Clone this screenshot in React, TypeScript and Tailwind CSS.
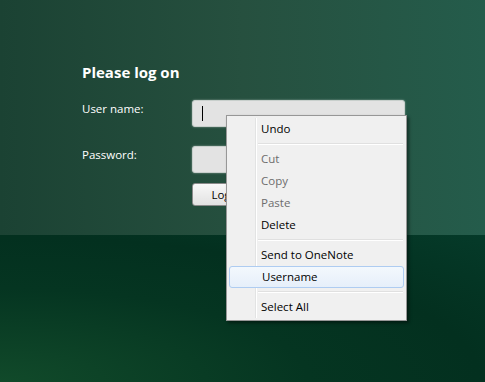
import React from 'react';

const font = { fontFamily: '"Open Sans", "Noto Sans", sans-serif' };

type Item = { label: string; disabled?: boolean; hot?: boolean } | 'sep';

const items: Item[] = [
  { label: 'Undo' },
  'sep',
  { label: 'Cut', disabled: true },
  { label: 'Copy', disabled: true },
  { label: 'Paste', disabled: true },
  { label: 'Delete' },
  'sep',
  { label: 'Send to OneNote' },
  { label: 'Username', hot: true },
  'sep',
  { label: 'Select All' },
];

function ContextMenu() {
  return (
    <div className="absolute left-[226px] top-[115px] w-[181px] bg-[#f0f0f0] border border-[#979797] shadow-[2px_2px_3px_rgba(0,0,0,0.45)] py-[2px] px-[2px]">
      {/* gutter line */}
      <div className="absolute left-[28px] top-[2px] bottom-[2px] w-px bg-[#e2e3e3]" />
      <div className="absolute left-[29px] top-[2px] bottom-[2px] w-px bg-white" />
      {items.map((it, i) =>
        it === 'sep' ? (
          <div key={i} className="ml-[29px] mr-[1px] h-[8px] flex flex-col justify-center">
            <div className="h-px bg-[#e0e0e0]" />
            <div className="h-px bg-white" />
          </div>
        ) : (
          <div
            key={i}
            className={`relative h-[22px] flex items-center pl-[32px] text-[11.5px] ${
              it.disabled ? 'text-[#6d6d6d]' : 'text-black'
            } ${it.hot ? 'rounded-[3px] border border-[#aeccf1] bg-gradient-to-b from-[#f3f8fd] to-[#e6effa] pl-[31px]' : ''}`}
          >
            {it.label}
          </div>
        )
      )}
    </div>
  );
}

export default function App() {
  return (
    <div style={font} className="relative w-[485px] h-[382px] overflow-hidden flex flex-col">
      <div className="h-[235px] bg-gradient-to-r from-[#1b4233] via-[#26503f] to-[#245c4b] pl-[82px] pt-[62px]">
        <h1 className="text-white font-bold text-[15px] leading-[20px]">Please log on</h1>
        <div className="mt-[18px] grid grid-cols-[110px_213px] gap-y-[19px] items-center">
          <span className="text-white text-[11.5px] -mt-[9px]">User name:</span>
          <div className="h-[27px] rounded-[3px] bg-[#e3e3e3] border border-[#c8cfcc] shadow-[0_0_2px_rgba(255,255,255,0.5)] flex items-center pl-[9px]">
            <div className="w-px h-[15px] bg-black" />
          </div>
          <span className="text-white text-[11.5px] -mt-[9px]">Password:</span>
          <div className="h-[27px] rounded-[3px] bg-[#e3e3e3] border border-[#c8cfcc] shadow-[0_0_2px_rgba(255,255,255,0.5)]" />
        </div>
        <div className="ml-[110px] mt-[10px] w-[75px] h-[23px] rounded-[3px] border border-[#8a8a8a] bg-gradient-to-b from-[#f8f8f8] to-[#e2e2e2] text-[11.5px] text-black flex items-center justify-center">
          Log on
        </div>
      </div>
      <div className="flex-1 bg-[radial-gradient(ellipse_at_0%_100%,#114a2a_0%,#053521_45%,#03301f_70%,#053a29_100%)]" />
      <ContextMenu />
    </div>
  );
}
